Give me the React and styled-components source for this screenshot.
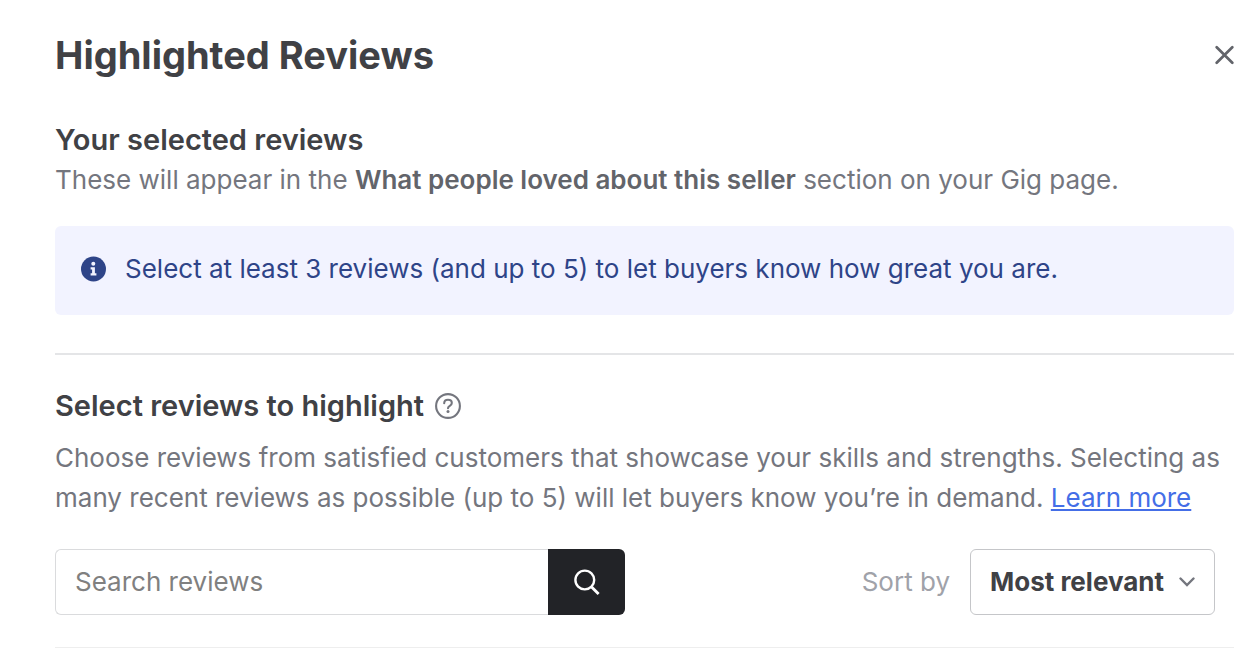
import React, { useState } from "react";
import styled, { createGlobalStyle } from "styled-components";

const GlobalStyle = createGlobalStyle`
	* {
		box-sizing: border-box;
	}

	body {
		margin: 0;
		background: #ffffff;
		color: #74767e;
		font-family: Inter, "Liberation Sans", sans-serif;
		font-size: 26px;
		line-height: 40px;
	}

	h1, h2, p {
		margin: 0;
	}

	button, input, select {
		font: inherit;
	}
`;

const Panel = styled.main`
	padding: 31px 12px 0 55px;
`;

const Header = styled.header`
	display: flex;
	align-items: center;
	justify-content: space-between;
	margin-bottom: 41px;
`;

const Title = styled.h1`
	color: #404145;
	font-size: 38px;
	font-weight: 650;
	line-height: 48px;
`;

const CloseButton = styled.button`
	display: flex;
	padding: 0;
	border: 0;
	background: none;
	color: #62646a;
	cursor: pointer;
`;

const SectionTitle = styled.h2`
	display: flex;
	align-items: center;
	gap: 11px;
	color: #404145;
	font-size: 29px;
	font-weight: 600;
	line-height: 40px;
`;

const HelpButton = styled.button`
	display: flex;
	padding: 0;
	border: 0;
	background: none;
	color: #74767e;
	cursor: pointer;
`;

const Text = styled.p`
	margin-top: ${(props) => (props.$spaced ? "12px" : "0")};

	strong {
		color: #62646a;
		font-weight: 600;
	}

	a {
		color: #446ee7;
		text-decoration-thickness: 2px;
		text-underline-offset: 2px;
	}
`;

const Notice = styled.div`
	display: flex;
	align-items: center;
	gap: 19px;
	margin-top: 26px;
	padding: 23px 26px 26px;
	border-radius: 6px;
	background: #f2f3ff;
	color: #2e4488;

	svg {
		flex: none;
	}
`;

const Divider = styled.hr`
	height: ${(props) => (props.$light ? "1px" : "2px")};
	margin: ${(props) => (props.$light ? "32px 0 0" : "38px 0 31px")};
	border: 0;
	background: ${(props) => (props.$light ? "#eeeeee" : "#e4e5e7")};
`;

const Toolbar = styled.div`
	display: flex;
	align-items: center;
	justify-content: space-between;
	gap: 24px;
	margin-top: 31px;
	padding-right: 19px;
`;

const SearchForm = styled.form`
	display: flex;
	flex: 0 1 570px;
	height: 66px;
`;

const SearchInput = styled.input`
	flex: 1;
	min-width: 0;
	padding: 0 19px;
	border: 1px solid #dadbdd;
	border-right: 0;
	border-radius: 6px 0 0 6px;
	outline: 0;
	background: #ffffff;
	color: #404145;

	&::placeholder {
		color: #808080;
		opacity: 1;
	}
`;

const SearchButton = styled.button`
	display: flex;
	align-items: center;
	justify-content: center;
	width: 77px;
	padding: 0;
	border: 0;
	border-radius: 0 6px 6px 0;
	background: #222327;
	color: #ffffff;
	cursor: pointer;
`;

const Sort = styled.div`
	display: flex;
	align-items: center;
	gap: 20px;

	label {
		color: #a0a2a9;
	}
`;

const SelectBox = styled.div`
	display: grid;
	align-items: center;

	select,
	svg {
		grid-area: 1 / 1;
	}

	svg {
		justify-self: end;
		margin-right: 20px;
		color: #74767e;
		pointer-events: none;
	}
`;

const Select = styled.select`
	width: 245px;
	height: 66px;
	padding: 0 40px 0 19px;
	border: 1px solid #c5c6c9;
	border-radius: 6px;
	appearance: none;
	background: #ffffff;
	color: #404145;
	font-weight: 650;
	cursor: pointer;
`;

function CloseIcon() {
	return (
		<svg width='19' height='20' viewBox='0 0 19 20' fill='none' aria-hidden='true'>
			<path d='M1.700 2.200l15.600 15.600M17.300 2.200L1.700 17.800' stroke='currentColor' strokeWidth='2.700' strokeLinecap='round' />
		</svg>
	);
}

function InfoIcon() {
	return (
		<svg width='25' height='26' viewBox='0 0 25 26' fill='none' aria-hidden='true'>
			<circle cx='12.5' cy='13' r='12.5' fill='currentColor' />
			<circle cx='12.3' cy='7.8' r='2' fill='#f2f3ff' />
			<path d='M9.6 11.2h4.3v6h1.5v2.2H9.6v-2.2h1.5v-3.8H9.6z' fill='#f2f3ff' />
		</svg>
	);
}

function HelpIcon() {
	return (
		<svg width='26' height='26' viewBox='0 0 26 26' fill='none' aria-hidden='true'>
			<circle cx='13' cy='13' r='11.9' stroke='currentColor' strokeWidth='2.1' />
			<path
				d='M9.2 10.2c.1-2.2 1.6-3.4 3.8-3.4s3.8 1.2 3.8 3.1c0 1.500-.8 2.200-2 2.900-1.300.8-1.800 1.300-1.800 2.400'
				stroke='currentColor'
				strokeWidth='2.1'
				strokeLinecap='round'
			/>
			<circle cx='13' cy='18.5' r='1.5' fill='currentColor' />
		</svg>
	);
}

function SearchIcon() {
	return (
		<svg width='26' height='28' viewBox='0 0 26 28' fill='none' aria-hidden='true'>
			<circle cx='10.8' cy='12' r='9.4' stroke='currentColor' strokeWidth='2.4' />
			<path d='M17.6 19l7 7' stroke='currentColor' strokeWidth='2.9' />
		</svg>
	);
}

function ChevronIcon() {
	return (
		<svg width='16' height='10' viewBox='0 0 16 10' fill='none' aria-hidden='true'>
			<path d='M1.5 1.5L8 8l6.5-6.5' stroke='currentColor' strokeWidth='2.4' strokeLinecap='round' />
		</svg>
	);
}

function HighlightedReviews() {
	const [query, setQuery] = useState("");
	const [sort, setSort] = useState("relevant");

	return (
		<Panel>
			<Header>
				<Title>Highlighted Reviews</Title>
				<CloseButton type='button' aria-label='Close'>
					<CloseIcon />
				</CloseButton>
			</Header>

			<section>
				<SectionTitle>Your selected reviews</SectionTitle>
				<Text>
					These will appear in the <strong>What people loved about this seller</strong> section on your Gig page.
				</Text>
				<Notice>
					<InfoIcon />
					<p>Select at least 3 reviews (and up to 5) to let buyers know how great you are.</p>
				</Notice>
			</section>

			<Divider />

			<section>
				<SectionTitle>
					Select reviews to highlight
					<HelpButton type='button' aria-label='About highlighted reviews'>
						<HelpIcon />
					</HelpButton>
				</SectionTitle>
				<Text $spaced>
					Choose reviews from satisfied customers that showcase your skills and strengths. Selecting as many recent
					reviews as possible (up to 5) will let buyers know you’re in demand. <a href='#learn-more'>Learn more</a>
				</Text>

				<Toolbar>
					<SearchForm role='search' onSubmit={(e) => e.preventDefault()}>
						<SearchInput
							type='text'
							placeholder='Search reviews'
							aria-label='Search reviews'
							value={query}
							onChange={(e) => setQuery(e.target.value)}
						/>
						<SearchButton type='submit' aria-label='Search'>
							<SearchIcon />
						</SearchButton>
					</SearchForm>

					<Sort>
						<label htmlFor='sort'>Sort by</label>
						<SelectBox>
							<Select id='sort' value={sort} onChange={(e) => setSort(e.target.value)}>
								<option value='relevant'>Most relevant</option>
								<option value='recent'>Most recent</option>
							</Select>
							<ChevronIcon />
						</SelectBox>
					</Sort>
				</Toolbar>
			</section>

			<Divider $light />
		</Panel>
	);
}

export default function App() {
	return (
		<>
			<GlobalStyle />
			<HighlightedReviews />
		</>
	);
}
